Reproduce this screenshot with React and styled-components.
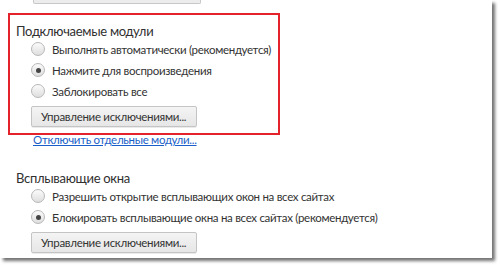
import styled, { createGlobalStyle } from 'styled-components'

const GlobalStyle = createGlobalStyle`
  html, body {
    margin: 0;
    padding: 0;
    background: #fff;
  }
  body {
    font-family: Lato, "Noto Sans", sans-serif;
    color: #303030;
    overflow: hidden;
  }
`

const Page = styled.div`
  width: 500px;
  height: 269px;
  overflow: hidden;
  background: #fff;
`

const Panel = styled.div`
  width: 492px;
  height: 258px;
  background: #fff;
  box-shadow: 3px 3px 3px rgba(0, 0, 0, 0.55);
`

const TopButton = styled.div`
  margin-left: 33px;
  width: 166px;
  height: 3px;
  border: 1px solid #c8c8c8;
  border-top: none;
  border-radius: 0 0 2px 2px;
  background: #ececec;
`

const Highlight = styled.div`
  margin: 9px 0 0 8px;
  width: 272px;
  height: 122px;
  border: 2px solid #e3222b;
  box-sizing: border-box;
  padding: 7px 0 0 6px;
`

const Section = styled.div`
  padding: ${p => p.$pad || '0'};
`

const Title = styled.div`
  font-size: 13px;
  letter-spacing: -0.3px;
  line-height: 18px;
  color: #303030;
  margin-bottom: 2px;
  white-space: nowrap;
`

const Options = styled.div`
  display: flex;
  flex-direction: column;
  gap: 7px;
  padding-left: 15px;
`

const Option = styled.label`
  display: flex;
  align-items: center;
  gap: 7px;
  font-size: 11.5px;
  letter-spacing: -0.3px;
  line-height: 13px;
  color: #333;
  white-space: nowrap;
`

const Radio = styled.span`
  width: 12px;
  height: 12px;
  border-radius: 50%;
  border: 1px solid #b8b8b8;
  background: linear-gradient(#fbfbfb, #dedede);
  display: flex;
  align-items: center;
  justify-content: center;
  flex-shrink: 0;
  &::after {
    content: '';
    display: ${p => (p.$checked ? 'block' : 'none')};
    width: 5px;
    height: 5px;
    border-radius: 50%;
    background: #444;
  }
`

const Button = styled.button`
  display: block;
  margin: 8px 0 0 15px;
  height: 21px;
  width: 166px;
  padding: 0 0 0 9px;
  font-family: inherit;
  font-size: 11.5px;
  letter-spacing: -0.3px;
  color: #333;
  text-align: left;
  white-space: nowrap;
  border: 1px solid #c4c4c4;
  border-radius: 2px;
  background: linear-gradient(#f4f4f4, #e6e6e6);
  box-shadow: 0 1px 0 rgba(0, 0, 0, 0.08);
`

const Link = styled.a`
  display: block;
  margin: -2px 0 0 33px;
  font-size: 11.5px;
  letter-spacing: -0.3px;
  line-height: 14px;
  color: #1a5fc8;
  text-decoration: underline;
  white-space: nowrap;
`

export default function App() {
  return (
    <>
      <GlobalStyle />
      <Page>
        <Panel>
          <TopButton />
          <Highlight>
            <Title>Подключаемые модули</Title>
            <Options>
              <Option><Radio />Выполнять автоматически (рекомендуется)</Option>
              <Option><Radio $checked />Нажмите для воспроизведения</Option>
              <Option><Radio />Заблокировать все</Option>
            </Options>
            <Button>Управление исключениями...</Button>
          </Highlight>
          <Link>Отключить отдельные модули...</Link>
          <Section $pad="22px 0 0 16px">
            <Title>Всплывающие окна</Title>
            <Options>
              <Option><Radio />Разрешить открытие всплывающих окон на всех сайтах</Option>
              <Option><Radio $checked />Блокировать всплывающие окна на всех сайтах (рекомендуется)</Option>
            </Options>
            <Button>Управление исключениями...</Button>
          </Section>
        </Panel>
      </Page>
    </>
  )
}
